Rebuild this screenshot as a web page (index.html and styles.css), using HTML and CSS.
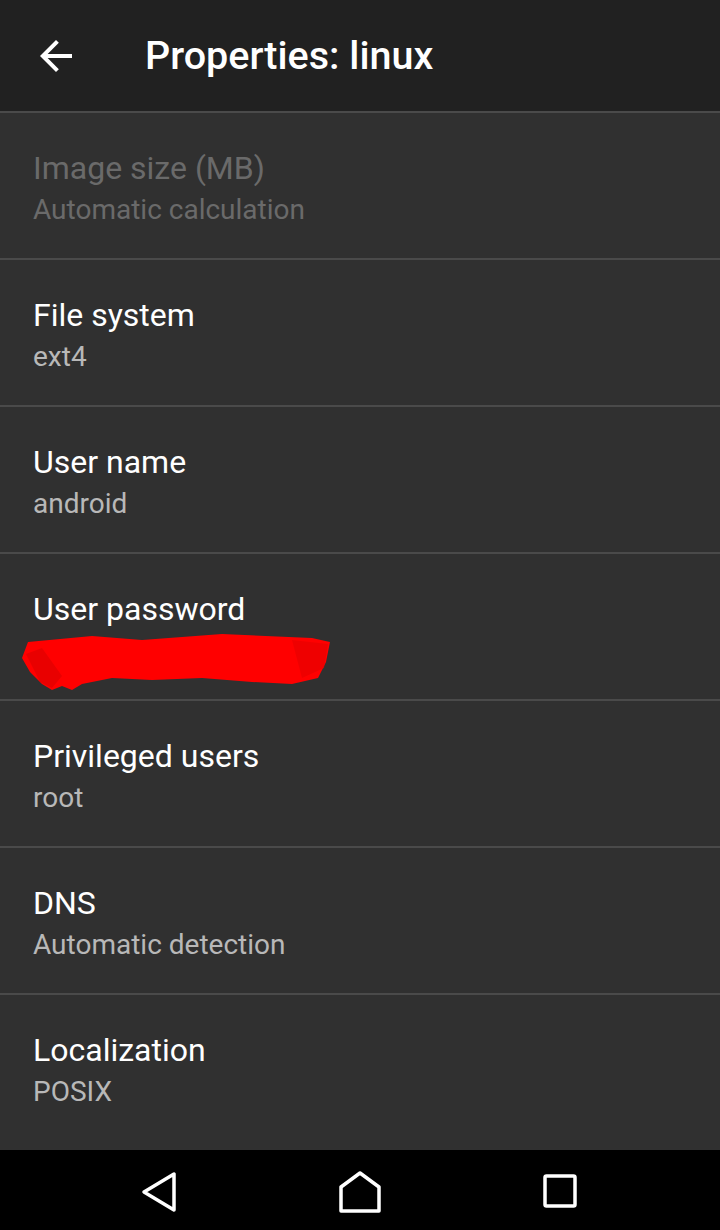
FILE: index.html
```html
<!DOCTYPE html>
<html>
<head>
<meta charset="utf-8">
<link rel="stylesheet" href="styles.css">
</head>
<body>
<div class="screen">
  <header class="appbar">
    <svg class="back" viewBox="0 0 24 24" width="48" height="48"><path d="M20 11H7.83l5.59-5.59L12 4l-8 8 8 8 1.41-1.41L7.83 13H20v-2z" fill="#fff"/></svg>
    <h1 class="title">Properties: linux</h1>
  </header>
  <main class="list">
    <div class="row disabled">
      <div class="label">Image size (MB)</div>
      <div class="value">Automatic calculation</div>
    </div>
    <div class="row">
      <div class="label">File system</div>
      <div class="value">ext4</div>
    </div>
    <div class="row">
      <div class="label">User name</div>
      <div class="value">android</div>
    </div>
    <div class="row">
      <div class="label">User password</div>
      <svg class="scribble" viewBox="0 0 310 66" width="310" height="66">
        <path d="M6 14 L70 8 L120 12 L200 6 L290 10 L308 14 L304 34 L296 50 L270 56 L230 54 L180 50 L130 52 L90 50 L60 56 L50 62 L40 58 L30 62 L20 56 L8 44 L0 30 Z" fill="#ff0000"/>
        <path d="M4 26 L20 20 L40 48 L30 60 L18 54 Z" fill="#e00000" opacity="0.7"/>
        <path d="M270 12 L306 16 L302 40 L280 50 Z" fill="#e80000" opacity="0.7"/>
      </svg>
    </div>
    <div class="row">
      <div class="label">Privileged users</div>
      <div class="value">root</div>
    </div>
    <div class="row">
      <div class="label">DNS</div>
      <div class="value">Automatic detection</div>
    </div>
    <div class="row last">
      <div class="label">Localization</div>
      <div class="value">POSIX</div>
    </div>
  </main>
  <nav class="navbar">
    <span class="navbtn"><svg width="40" height="44" viewBox="0 0 40 44"><path d="M34 4 L34 40 L4 22 Z" fill="none" stroke="#fff" stroke-width="3.5" stroke-linejoin="round"/></svg></span>
    <span class="navbtn"><svg width="44" height="44" viewBox="0 0 44 44"><path d="M3 17 L22 3 L41 17 L41 41 L3 41 Z" fill="none" stroke="#fff" stroke-width="3.5" stroke-linejoin="round"/></svg></span>
    <span class="navbtn"><svg width="40" height="40" viewBox="0 0 40 40"><rect x="5" y="4" width="30" height="30" rx="1.5" fill="none" stroke="#fff" stroke-width="3.5"/></svg></span>
  </nav>
</div>
</body>
</html>
```
FILE: styles.css
```css
* { box-sizing: border-box; margin: 0; padding: 0; }
html, body { width: 720px; height: 1230px; background: #303030; overflow: hidden; }
body { font-family: Roboto, "Noto Sans", sans-serif; }
.screen { display: flex; flex-direction: column; height: 1230px; }
.appbar {
  height: 111px;
  background: #212121;
  display: flex;
  align-items: center;
  padding-left: 32px;
}
.back { display: block; flex: none; }
.title {
  color: #fff;
  font-weight: 500;
  font-size: 39.5px;
  margin-left: 65px;
}
.list { flex: 1; display: flex; flex-direction: column; background: #303030; }
.row {
  height: 147px;
  border-top: 2px solid #4a4a4a;
  padding: 36px 33px 0;
}
.row.last { flex: 1; }
.label { color: #fff; font-size: 32px; line-height: 38px; }
.value { color: #b8b8b8; font-size: 28px; line-height: 34px; margin-top: 6px; }
.disabled .label, .disabled .value { color: #6a6a6a; }
.scribble { display: block; margin-left: -11px; }
.navbar {
  height: 80px;
  background: #000;
  display: flex;
  align-items: center;
  padding: 4px 0 0 130px;
  gap: 140px;
}
.navbtn { width: 60px; display: flex; justify-content: center; }
.navbtn svg { display: block; }
```
